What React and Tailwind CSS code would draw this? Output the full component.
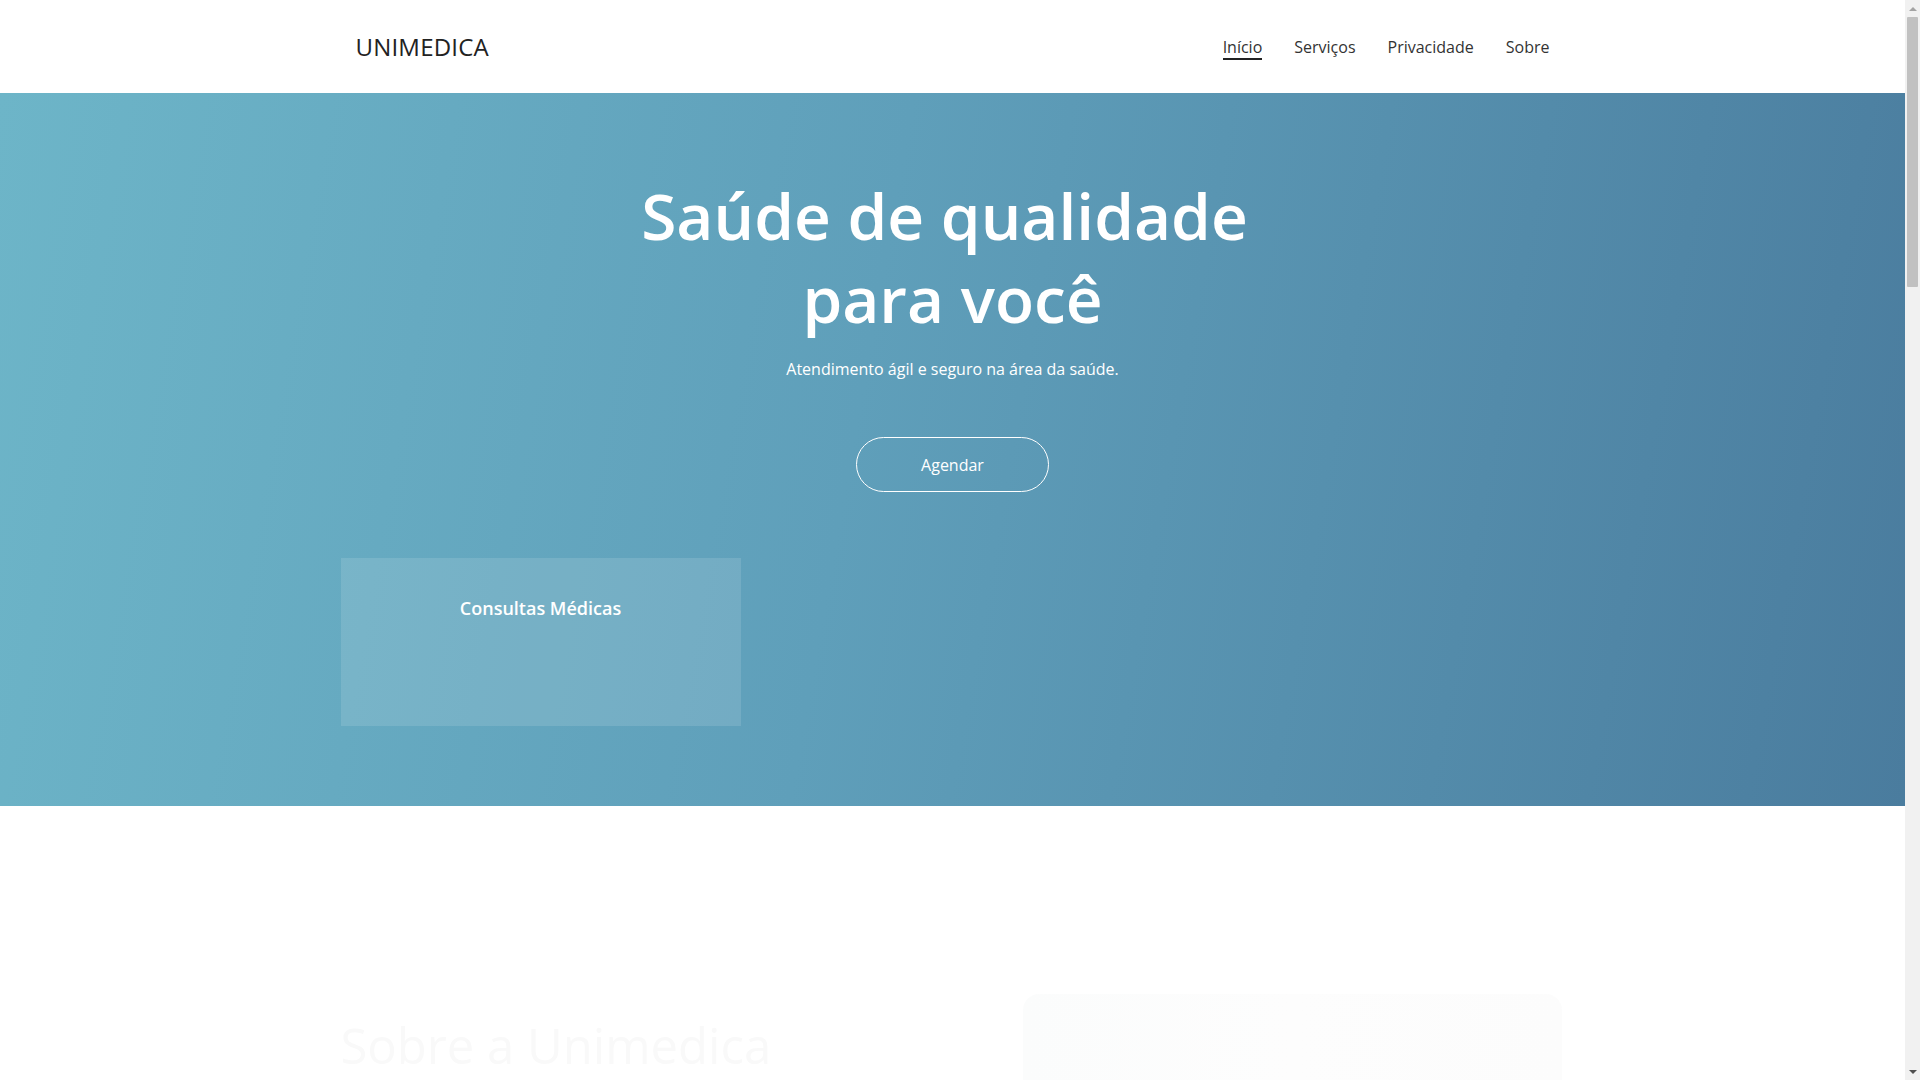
import React from 'react'

const NAV = ['Início', 'Serviços', 'Privacidade', 'Sobre']

function Header() {
  return (
    <header className="h-[93px] bg-white">
      <div className="mx-auto flex h-full w-[1224px] items-center justify-between px-[15px]">
        <a className="text-[24px] leading-none tracking-[0.2px] text-[#222]">UNIMEDICA</a>
        <nav className="flex items-center gap-8 text-[16px] text-[#333]">
          {NAV.map((item, i) => (
            <a
              key={item}
              className={i === 0 ? 'border-b-2 border-[#222] pt-[2px] leading-[22px]' : 'leading-[22px]'}
            >
              {item}
            </a>
          ))}
        </nav>
      </div>
    </header>
  )
}

function Hero() {
  return (
    <section className="h-[713px] bg-[linear-gradient(100deg,#6db5c8_0%,#5f9fba_45%,#4a7c9e_100%)] text-white">
      <div className="mx-auto w-[1224px] pt-[81px]">
        <h1 className="text-center text-[64px] font-semibold leading-[83px]">
          <span className="block pr-[16px]">Saúde de qualidade</span>
          <span className="block">para você</span>
        </h1>
        <p className="mt-[17px] text-center text-[16px] font-normal leading-[24px]">
          Atendimento ágil e seguro na área da saúde.
        </p>
        <div className="mt-[56px] flex justify-center">
          <button className="h-[55px] w-[193px] rounded-full border border-white text-[16px] text-white">
            Agendar
          </button>
        </div>
        <div className="mt-[66px] grid grid-cols-3">
          <div className="h-[168px] w-[400px] bg-white/[0.12] pt-[37px] text-center">
            <h3 className="text-[18px] font-semibold leading-[27px]">Consultas Médicas</h3>
          </div>
        </div>
      </div>
    </section>
  )
}

function About() {
  return (
    <section className="bg-white pb-[200px]">
      <div className="mx-auto grid w-[1224px] grid-cols-2 pt-[188px]">
        <div className="pt-[22px]">
          <h2 className="text-[49px] font-medium leading-[58px] text-[#f9f9f9]">Sobre a Unimedica</h2>
          <p className="mt-6 text-[16px] leading-[26px] text-[#fdfdfd]">
            A Unimedica oferece atendimento médico com qualidade, agilidade e segurança.
          </p>
        </div>
        <div className="pl-[70px]">
          <div className="h-[340px] w-[539px] rounded-[16px] bg-[linear-gradient(90deg,#fbfcfc,#fdfdfd_50%,#fcfcfc)]" />
        </div>
      </div>
    </section>
  )
}

// page scrollbar as it appears in the screenshot
function Scrollbar() {
  return (
    <div className="flex w-[15px] shrink-0 flex-col bg-[#f1f1f1]">
      <div className="flex h-[17px] items-center justify-center">
        <div className="h-0 w-0 border-x-[4px] border-b-[4px] border-x-transparent border-b-[#a3a3a3]" />
      </div>
      <div className="mx-[2px] h-[270px] rounded-[1px] bg-[#c1c1c1]" />
      <div className="flex-1" />
      <div className="flex h-[17px] items-center justify-center">
        <div className="h-0 w-0 border-x-[4px] border-t-[4px] border-x-transparent border-t-[#505050]" />
      </div>
    </div>
  )
}

export default function App() {
  return (
    <div className="flex h-screen overflow-hidden bg-white font-['Open_Sans',sans-serif]">
      <main className="min-w-0 flex-1 overflow-hidden">
        <Header />
        <Hero />
        <About />
      </main>
      <Scrollbar />
    </div>
  )
}
